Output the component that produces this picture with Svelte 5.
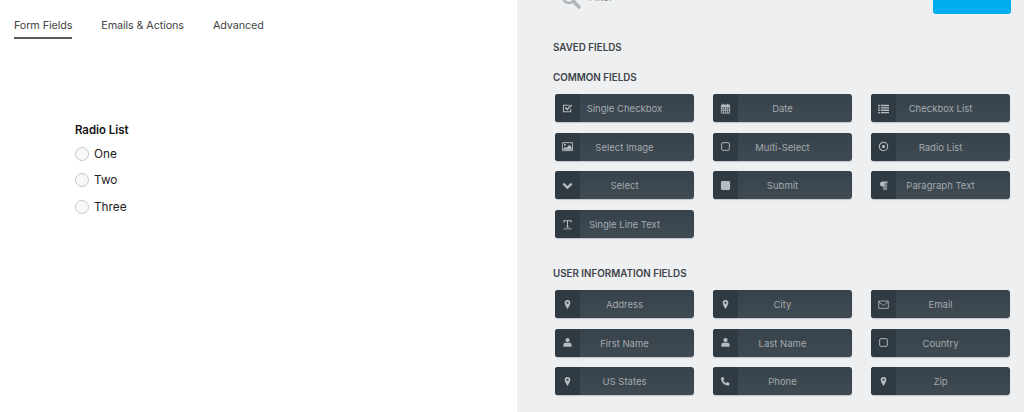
<script lang="ts">
    const tabs = ['Form Fields', 'Emails & Actions', 'Advanced'];
    const options = ['One', 'Two', 'Three'];

    const commonFields = [
        { label: 'Single Checkbox', icon: 'check' },
        { label: 'Date', icon: 'calendar' },
        { label: 'Checkbox List', icon: 'list' },
        { label: 'Select Image', icon: 'image' },
        { label: 'Multi-Select', icon: 'square' },
        { label: 'Radio List', icon: 'radio' },
        { label: 'Select', icon: 'chevron' },
        { label: 'Submit', icon: 'solid' },
        { label: 'Paragraph Text', icon: 'para' },
        { label: 'Single Line Text', icon: 'text' }
    ];

    const userFields = [
        { label: 'Address', icon: 'pin' },
        { label: 'City', icon: 'pin' },
        { label: 'Email', icon: 'mail' },
        { label: 'First Name', icon: 'user' },
        { label: 'Last Name', icon: 'user' },
        { label: 'Country', icon: 'square' },
        { label: 'US States', icon: 'pin' },
        { label: 'Phone', icon: 'phone' },
        { label: 'Zip', icon: 'pin' }
    ];
</script>

{#snippet glyph(name)}
    <svg width="11" height="11" viewBox="0 0 12 12" aria-hidden="true">
        {#if name === 'check'}
            <path d="M9.5 6.5v3h-8v-7h6.5" fill="none" stroke="currentColor" stroke-width="1.1" />
            <path d="M3.4 4.8l2.2 2.3 5-5" fill="none" stroke="currentColor" stroke-width="1.5" />
        {:else if name === 'calendar'}
            <path d="M1.5 2.5h9v8.5h-9z" fill="none" stroke="currentColor" stroke-width="1" />
            <path d="M1.5 2h9v2.5h-9zM3 .8h1.2v2H3zM7.8.8H9v2H7.800z" fill="currentColor" />
            <path d="M1.500 6.200h9M1.500 8.200h9M3.800 4.500V11M6 4.500V11M8.200 4.500V11" stroke="currentColor" stroke-width=".8" />
        {:else if name === 'list'}
            <path d="M0 2h2v1.500H0zM3 2h9v1.500H3zM0 4.600h2v1.500H0zM3 4.600h9v1.500H3zM0 7.200h2v1.500H0zM3 7.200h9v1.500H3zM0 9.800h2v1.500H0zM3 9.800h9v1.500H3z" fill="currentColor" />
        {:else if name === 'image'}
            <path d="M.5 1.800h11v8.700H.5z" fill="none" stroke="currentColor" stroke-width="1" />
            <circle cx="3.200" cy="4.200" r="1.100" fill="currentColor" />
            <path d="M1.500 9.500V8l2-1.500 1.200 1L8 4.200l2.500 2.600v2.700z" fill="currentColor" />
        {:else if name === 'square'}
            <rect x="1.800" y="1.800" width="8.400" height="8.400" rx="1.400" fill="none" stroke="currentColor" stroke-width="1" />
        {:else if name === 'radio'}
            <circle cx="6" cy="6" r="4.600" fill="none" stroke="currentColor" stroke-width="1.200" />
            <circle cx="6" cy="6" r="1.700" fill="currentColor" />
        {:else if name === 'chevron'}
            <path d="M1.500 4l4.500 4.300L10.500 4" fill="none" stroke="currentColor" stroke-width="2.400" />
        {:else if name === 'solid'}
            <rect x="1" y="1" width="10" height="10" rx="1.600" fill="currentColor" />
        {:else if name === 'para'}
            <path d="M5 1.500h5.500v1.400H9.500V11H8.200V2.900H7.300V11H6V7H5a2.750 2.750 0 0 1 0-5.500z" fill="currentColor" />
        {:else if name === 'text'}
            <path d="M2 3.800V2h8v1.800M6 2v6.800M4.500 8.800h3" fill="none" stroke="currentColor" stroke-width="1.100" />
            <path d="M1.500 10.800h9" stroke="currentColor" stroke-width=".9" />
        {:else if name === 'pin'}
            <path fill-rule="evenodd" d="M6 1a3.100 3.100 0 0 1 3.100 3.100C9.100 5.900 7.300 8.900 6 11 4.700 8.900 2.900 5.900 2.900 4.100A3.100 3.100 0 0 1 6 1zm0 1.900a1.200 1.200 0 1 0 0 2.400 1.200 1.200 0 0 0 0-2.400z" fill="currentColor" />
        {:else if name === 'user'}
            <circle cx="6" cy="3.400" r="2.300" fill="currentColor" />
            <path d="M1.500 10.500V8.400C1.500 7 2.800 6.300 4 6.300h4c1.200 0 2.500.7 2.500 2.100v2.100z" fill="currentColor" />
        {:else if name === 'mail'}
            <path d="M.8 2.200h10.400v8H.8z" fill="none" stroke="currentColor" stroke-width=".9" />
            <path d="M1 3.200l5 4 5-4" fill="none" stroke="currentColor" stroke-width=".9" />
        {:else if name === 'phone'}
            <path d="M1.500 1.500L3.600 1l1.200 2.500-1.200 1c.6 1.400 1.700 2.500 3.200 3.200l1-1.200 2.700 1.200-.5 2.200c-.1.400-.4.600-.8.600C4.800 10.500 1 6.700 1 2.300c0-.4.200-.7.500-.8z" fill="currentColor" />
        {/if}
    </svg>
{/snippet}

{#snippet fieldGrid(fields)}
    <div class="field-grid">
        {#each fields as field}
            <div class="field-btn">
                <span class="field-icon">{@render glyph(field.icon)}</span>
                <span class="field-label">{field.label}</span>
            </div>
        {/each}
    </div>
{/snippet}

<div class="builder">
    <main class="canvas">
        <nav class="tabs">
            {#each tabs as tab, i}
                <span class="tab" class:active={i === 0}>{tab}</span>
            {/each}
        </nav>

        <section class="preview">
            <div class="preview-title">Radio List</div>
            {#each options as option}
                <div class="radio-row">
                    <span class="radio"></span>
                    <span>{option}</span>
                </div>
            {/each}
        </section>
    </main>

    <aside class="sidebar">
        <div class="sidebar-top">
            <div class="filter">
                <svg class="search" width="20" height="20" viewBox="0 0 20 20" aria-hidden="true">
                    <circle cx="8" cy="8" r="6" fill="none" stroke="#b4b7ba" stroke-width="2.600" />
                    <path d="M12.500 12.500l5.500 5.500" stroke="#b4b7ba" stroke-width="3.600" stroke-linecap="round" />
                </svg>
                <span class="filter-text">Filter</span>
            </div>
            <div class="done-btn"></div>
        </div>

        <h3 class="saved">SAVED FIELDS</h3>
        <h3 class="common">COMMON FIELDS</h3>
        {@render fieldGrid(commonFields)}

        <h3 class="user">USER INFORMATION FIELDS</h3>
        {@render fieldGrid(userFields)}
    </aside>
</div>

<style>
    :global(body) {
        margin: 0;
        background: #fff;
        overflow: hidden;
    }

    .builder {
        display: flex;
        width: 1024px;
        height: 412px;
        overflow: hidden;
        font-family: Inter, "Liberation Sans", sans-serif;
    }

    .canvas {
        width: 517px;
        flex: none;
        background: #fff;
    }

    .tabs {
        display: flex;
        gap: 29px;
        padding: 18px 0 0 14px;
    }

    .tab {
        padding-bottom: 3px;
        font-size: 10.800px;
        letter-spacing: -0.1px;
        line-height: 16px;
        color: #444;
    }

    .tab.active {
        border-bottom: 2px solid #5c5c5c;
    }

    .preview {
        padding: 83px 0 0 75px;
    }

    .preview-title {
        font-size: 11.400px;
        font-weight: 600;
        line-height: 16px;
        color: #111;
        margin-bottom: 3px;
    }

    .radio-row {
        display: flex;
        align-items: center;
        gap: 5px;
        height: 26.300px;
        font-size: 11.800px;
        color: #222;
    }

    .radio {
        width: 12px;
        height: 12px;
        border: 1.500px solid #c8c8c8;
        border-radius: 50%;
        background: #f8f8f8;
    }

    .sidebar {
        flex: 1;
        background: #edeff1;
        padding-left: 36px;
        overflow: hidden;
    }

    .sidebar-top {
        display: flex;
        justify-content: space-between;
        align-items: flex-end;
        height: 14px;
        padding-right: 13px;
    }

    .filter {
        display: flex;
        align-items: flex-start;
        gap: 8px;
        margin-left: 8px;
        height: 14px;
    }

    .search {
        margin-top: -11px;
    }

    .filter-text {
        margin-top: -9px;
        font-size: 10px;
        line-height: 12px;
        color: #8a8f94;
    }

    .done-btn {
        width: 78px;
        height: 14px;
        background: #00aeef;
        border-radius: 0 0 3px 3px;
    }

    h3 {
        margin: 0;
        font-size: 9.800px;
        font-weight: 600;
        line-height: 14px;
        color: #3d4349;
    }

    .saved {
        margin-top: 27px;
    }

    .common {
        margin-top: 16px;
    }

    .user {
        margin-top: 29px;
    }

    .field-grid {
        display: grid;
        grid-template-columns: repeat(3, 139px);
        column-gap: 19px;
        row-gap: 10.700px;
        margin: 9px 0 0 2px;
    }

    .field-btn {
        display: flex;
        height: 28px;
        border-radius: 3px;
        overflow: hidden;
        background: linear-gradient(180deg, #36424c, #404a52);
        box-shadow: 0 1px 1px rgba(60, 75, 90, 0.25);
    }

    .field-icon {
        flex: none;
        display: flex;
        align-items: center;
        justify-content: center;
        width: 25px;
        background: #2f3a43;
        color: #b6bcc2;
    }

    .field-label {
        flex: 1;
        padding-right: 25px;
        text-align: center;
        font-size: 9.500px;
        line-height: 29px;
        color: #a4a9ad;
    }
</style>
